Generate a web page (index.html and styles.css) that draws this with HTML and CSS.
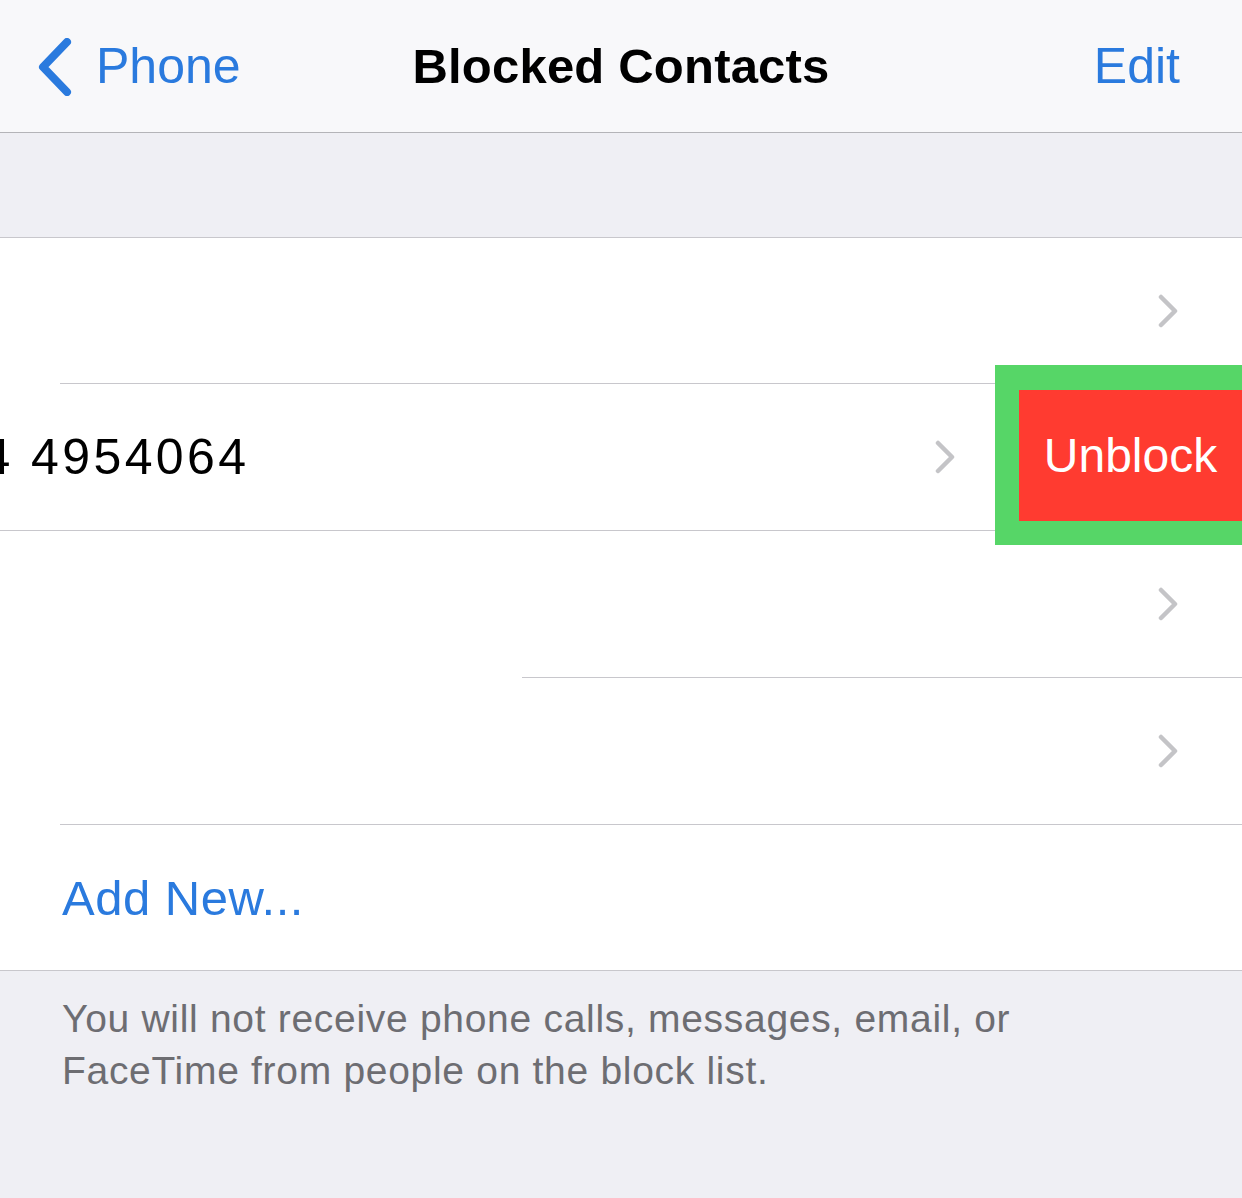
FILE: index.html
```html
<!DOCTYPE html>
<html lang="en">
<head>
<meta charset="utf-8">
<title>Blocked Contacts</title>
<link rel="stylesheet" href="styles.css">
</head>
<body>
<div class="screen">
  <header class="nav">
    <a class="nav-back">
      <svg class="back-chevron" viewBox="0 0 36 58" width="36" height="58"><path d="M31 4 L7 29 L31 54" fill="none" stroke="currentColor" stroke-width="8" stroke-linecap="round" stroke-linejoin="round"/></svg>
      <span>Phone</span>
    </a>
    <h1 class="nav-title">Blocked Contacts</h1>
    <a class="nav-edit">Edit</a>
  </header>

  <div class="gap"></div>

  <ul class="list">
    <li class="row">
      <div class="row-inner">
        <span class="row-label"></span>
        <svg class="chev" viewBox="0 0 20 34" width="20" height="34"><path d="M3 3 L17 17 L3 31" fill="none" stroke="currentColor" stroke-width="4.5" stroke-linecap="round" stroke-linejoin="round"/></svg>
      </div>
    </li>
    <li class="row row-swiped">
      <div class="row-inner">
        <span class="row-label number">+1 554 4954064</span>
        <svg class="chev" viewBox="0 0 20 34" width="20" height="34"><path d="M3 3 L17 17 L3 31" fill="none" stroke="currentColor" stroke-width="4.5" stroke-linecap="round" stroke-linejoin="round"/></svg>
      </div>
      <div class="swipe-action">
        <button class="unblock">Unblock</button>
      </div>
    </li>
    <li class="row row-wide-inset">
      <div class="row-inner">
        <span class="row-label"></span>
        <svg class="chev" viewBox="0 0 20 34" width="20" height="34"><path d="M3 3 L17 17 L3 31" fill="none" stroke="currentColor" stroke-width="4.5" stroke-linecap="round" stroke-linejoin="round"/></svg>
      </div>
    </li>
    <li class="row">
      <div class="row-inner">
        <span class="row-label"></span>
        <svg class="chev" viewBox="0 0 20 34" width="20" height="34"><path d="M3 3 L17 17 L3 31" fill="none" stroke="currentColor" stroke-width="4.5" stroke-linecap="round" stroke-linejoin="round"/></svg>
      </div>
    </li>
    <li class="row row-last">
      <div class="row-inner">
        <span class="row-label add-new">Add New...</span>
      </div>
    </li>
  </ul>

  <p class="footer">You will not receive phone calls, messages, email, or FaceTime from people on the block list.</p>
</div>
</body>
</html>
```

FILE: styles.css
```css
* { box-sizing: border-box; }

html, body {
  margin: 0;
  padding: 0;
}

body {
  width: 1242px;
  height: 1198px;
  overflow: hidden;
  background: #efeff4;
  font-family: "Liberation Sans", Arial, sans-serif;
  color: #000;
}

.screen {
  width: 1242px;
  height: 1198px;
  overflow: hidden;
}

.nav {
  height: 133px;
  background: #f8f8fa;
  border-bottom: 1px solid #b4b4b8;
  display: grid;
  grid-template-columns: 1fr auto 1fr;
  align-items: center;
}

.nav-back {
  display: flex;
  align-items: center;
  gap: 24px;
  padding-left: 36px;
  color: #2a7ade;
  font-size: 50px;
}

.back-chevron {
  display: block;
  margin-top: 2px;
}

.nav-title {
  margin: 0;
  font-size: 49px;
  font-weight: 700;
  letter-spacing: 0.2px;
}

.nav-edit {
  justify-self: end;
  padding-right: 62px;
  color: #2a7ade;
  font-size: 50px;
}

.gap {
  height: 104px;
}

.list {
  list-style: none;
  margin: 0;
  padding: 0;
  background: #fff;
  border-top: 1px solid #c8c7cc;
  border-bottom: 1px solid #c8c7cc;
}

.row {
  position: relative;
  height: 147px;
  padding-left: 60px;
}

.row:first-child,
.row:first-child .row-inner {
  height: 146px;
}

.row-inner {
  height: 147px;
  display: flex;
  align-items: center;
  justify-content: space-between;
  padding-left: 2px;
  padding-right: 64px;
  border-bottom: 1px solid #c8c7cc;
}

.row-last,
.row-last .row-inner {
  height: 145px;
}

.row-last .row-inner {
  border-bottom: none;
}

.row-wide-inset {
  padding-left: 0;
}

.row-wide-inset .row-inner {
  margin-left: 522px;
  padding-left: 0;
}

.row-label {
  font-size: 50px;
}

.number {
  letter-spacing: 3.4px;
  white-space: nowrap;
}

.add-new {
  color: #2a7ade;
  font-size: 49px;
  letter-spacing: 0.5px;
}

.chev {
  display: block;
  color: #c4c4c7;
}

.row-swiped .row-inner {
  transform: translateX(-223px);
}

.swipe-action {
  position: absolute;
  right: 0;
  top: -19px;
  width: 247px;
  height: 180px;
  background: #56d667;
  padding: 25px 0 24px 24px;
}

.unblock {
  display: block;
  width: 100%;
  height: 100%;
  border: none;
  margin: 0;
  background: #ff3b30;
  color: #fff;
  font-family: "Liberation Sans", Arial, sans-serif;
  font-size: 48px;
  padding: 0;
}

.footer {
  margin: 0;
  padding: 22px 180px 0 62px;
  font-size: 39px;
  line-height: 52px;
  letter-spacing: 0.7px;
  color: #6d6d72;
}
```
